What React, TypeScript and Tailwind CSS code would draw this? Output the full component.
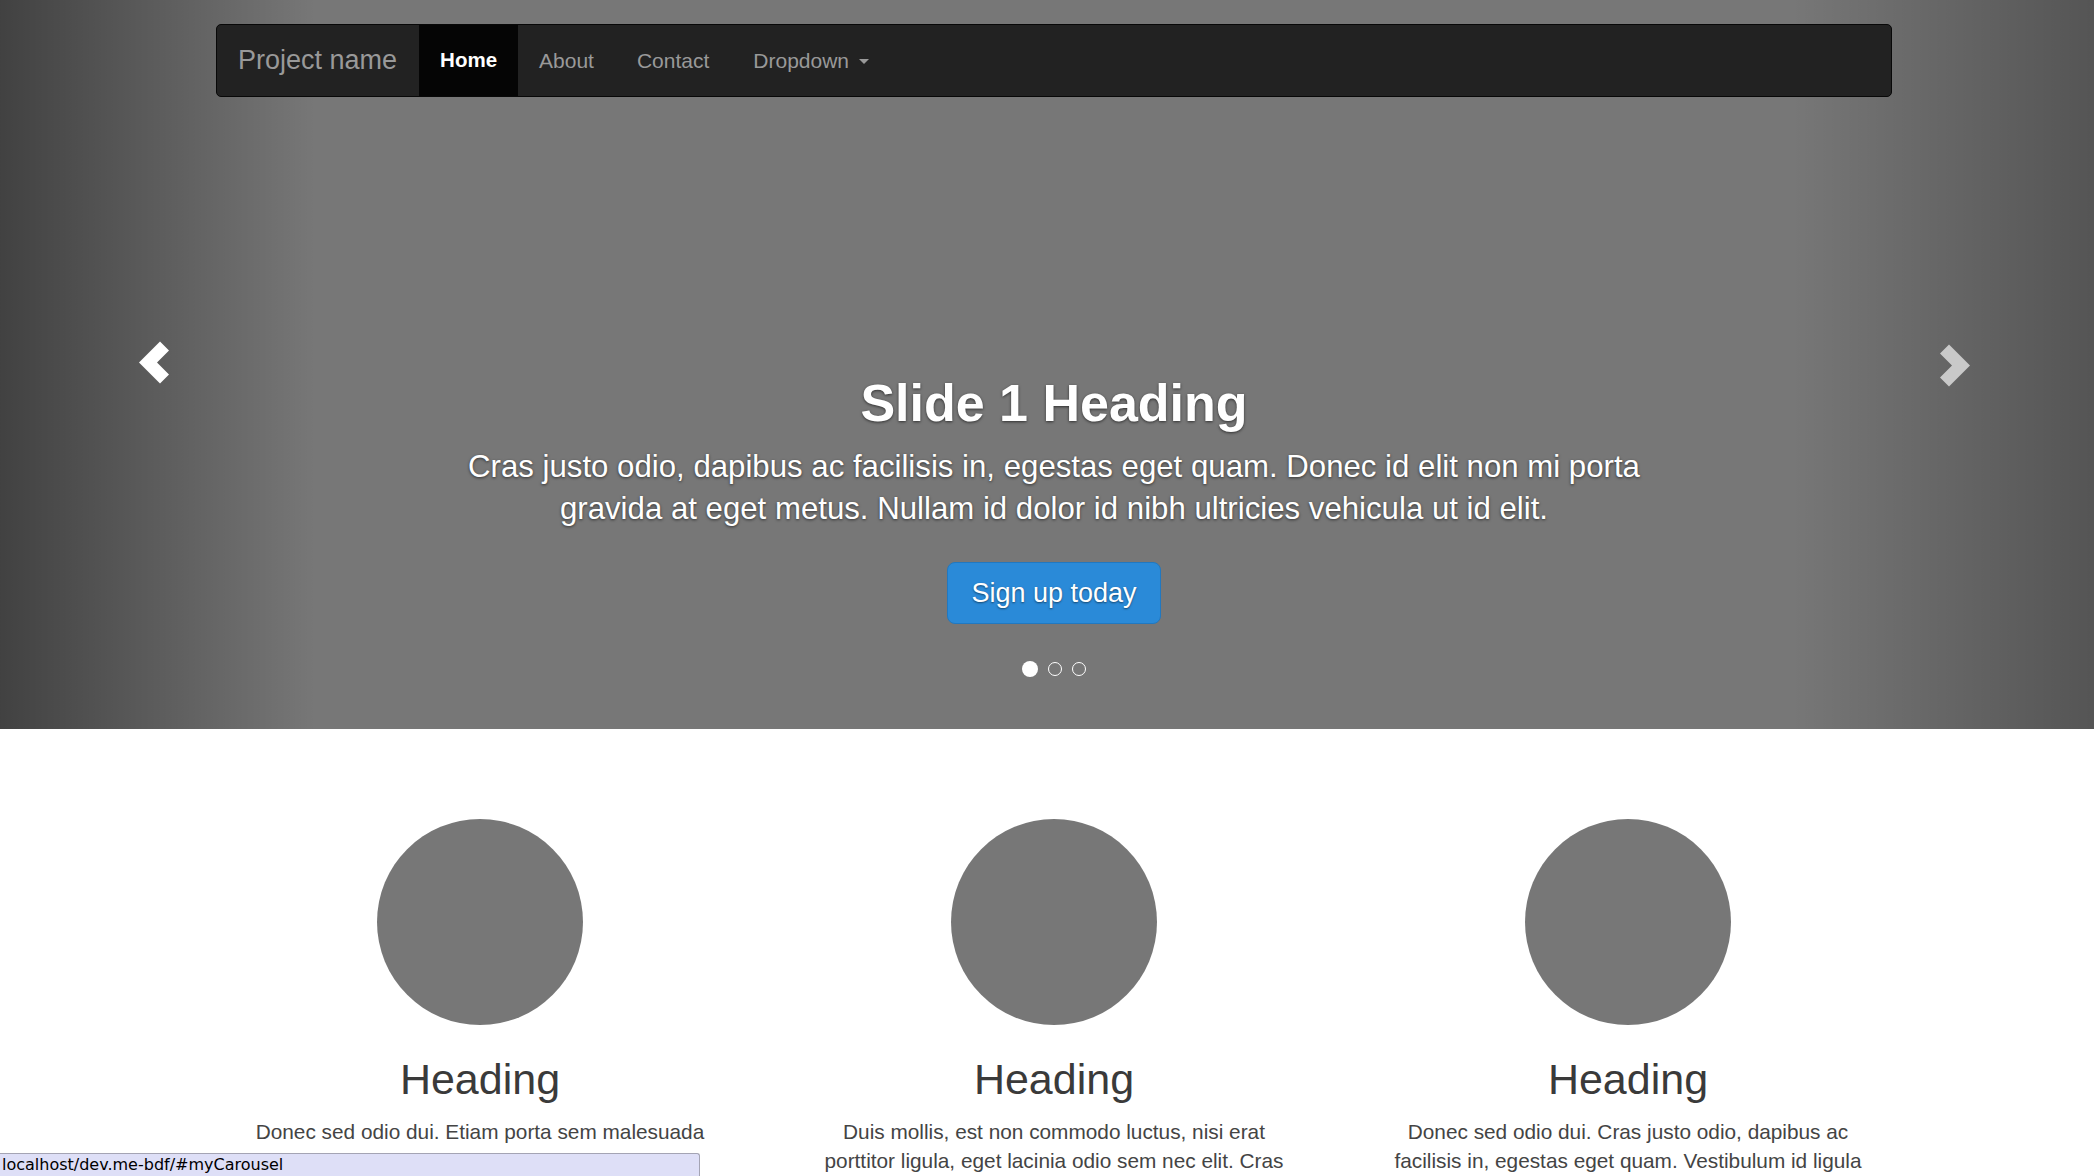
import React from "react";

function ChevronLeft({ className }: { className?: string }) {
  return (
    <svg width="32" height="43" viewBox="0 0 32 43" className={className}>
      <polygon points="0,21.5 21,0.5 30,9.5 18,21.5 30,33.5 21,42.5" fill="currentColor" />
    </svg>
  );
}

function ChevronRight({ className }: { className?: string }) {
  return (
    <svg width="32" height="43" viewBox="0 0 32 43" className={className}>
      <polygon points="32,21.5 11,0.5 2,9.5 14,21.5 2,33.5 11,42.5" fill="currentColor" />
    </svg>
  );
}

const cols = [
  "Donec sed odio dui. Etiam porta sem malesuada magna mollis euismod. Nullam id dolor id nibh ultricies vehicula ut id elit. Morbi leo risus, porta ac consectetur ac, vestibulum at eros. Praesent commodo cursus magna.",
  "Duis mollis, est non commodo luctus, nisi erat porttitor ligula, eget lacinia odio sem nec elit. Cras mattis consectetur purus sit amet fermentum. Fusce dapibus, tellus ac cursus commodo, tortor mauris condimentum nibh.",
  "Donec sed odio dui. Cras justo odio, dapibus ac facilisis in, egestas eget quam. Vestibulum id ligula porta felis euismod semper. Fusce dapibus, tellus ac cursus commodo, tortor mauris condimentum nibh, ut fermentum massa justo sit amet risus.",
];

export default function App() {
  return (
    <div className="w-full overflow-hidden bg-white font-['Liberation_Sans',Arial,sans-serif]">
      <div className="w-[2108px]">
        {/* Carousel */}
        <section className="relative h-[729px] bg-[#777] flex flex-col items-center">
          <div className="absolute left-0 top-0 h-full w-[316px] bg-gradient-to-r from-[rgba(0,0,0,0.45)] to-[rgba(0,0,0,0)] flex items-center justify-center">
            <ChevronLeft className="text-white mb-[4px] -ml-[6px]" />
          </div>
          <div className="absolute right-0 top-0 h-full w-[316px] bg-gradient-to-r from-[rgba(0,0,0,0)] to-[rgba(0,0,0,0.3)] flex items-center justify-center">
            <ChevronRight className="text-[#c9c9c9] mt-[1px] -mr-[8px]" />
          </div>

          {/* Navbar */}
          <nav className="relative z-10 mt-[24px] w-[1676px] h-[73px] bg-[#222] border border-[#080808] rounded-[5px] flex items-stretch overflow-hidden">
            <div className="flex items-center pl-[21px] pr-[22px] text-[27px] text-[#999]">Project name</div>
            <div className="flex items-center px-[21px] bg-[#050505] text-white text-[20.5px] font-bold">Home</div>
            <div className="flex items-center px-[21px] text-[#999] text-[21px]">About</div>
            <div className="flex items-center pl-[22px] pr-[23px] text-[#999] text-[21px]">Contact</div>
            <div className="flex items-center px-[21px] text-[#999] text-[21px] gap-[10px]">
              Dropdown
              <span className="inline-block w-0 h-0 border-l-[5px] border-r-[5px] border-t-[5px] border-l-transparent border-r-transparent border-t-[#999] mt-[2px]" />
            </div>
          </nav>

          {/* Caption */}
          <div className="relative z-10 mt-[278px] w-[1240px] flex flex-col items-center text-white text-center [text-shadow:0_1px_3px_rgba(0,0,0,0.6)]">
            <h1 className="text-[52px] leading-[57px] font-bold">Slide 1 Heading</h1>
            <p className="mt-[14px] text-[31.2px] leading-[42px]">
              Cras justo odio, dapibus ac facilisis in, egestas eget quam. Donec id elit non mi porta gravida at eget metus. Nullam id dolor id nibh ultricies vehicula ut id elit.
            </p>
            <button className="mt-[32px] h-[62px] px-[23px] rounded-[8px] bg-[#2a8ad8] border border-[#2178c0] text-[27px] text-white [text-shadow:0_1px_2px_rgba(0,0,0,0.5)]">
              Sign up today
            </button>
            <div className="mt-[37px] flex items-center gap-[10px]">
              <span className="w-[16px] h-[16px] rounded-full bg-white" />
              <span className="w-[14px] h-[14px] rounded-full border-[1.5px] border-white" />
              <span className="w-[14px] h-[14px] rounded-full border-[1.5px] border-white" />
            </div>
          </div>
        </section>

        {/* Marketing */}
        <section className="pt-[90px] pb-[40px]">
          <div className="mx-auto w-[1722px] grid grid-cols-3">
            {cols.map((t, i) => (
              <div key={i} className="flex flex-col items-center text-center">
                <div className="w-[206px] h-[206px] rounded-full bg-[#777]" />
                <h2 className="mt-[31px] text-[43px] leading-[47px] text-[#3a3a3a]">Heading</h2>
                <p className="mt-[14px] w-[490px] text-[20.8px] leading-[29px] text-[#444]">{t}</p>
              </div>
            ))}
          </div>
        </section>
      </div>

      {/* Browser status bar */}
      <div className="fixed bottom-0 left-0 w-[700px] h-[23px] bg-[#dedff7] border-t border-r border-[#a4a4b4] rounded-tr-[3px] flex items-center pl-[2px] text-[16px] text-black font-['DejaVu_Sans',sans-serif]">
        localhost/dev.me-bdf/#myCarousel
      </div>
    </div>
  );
}
